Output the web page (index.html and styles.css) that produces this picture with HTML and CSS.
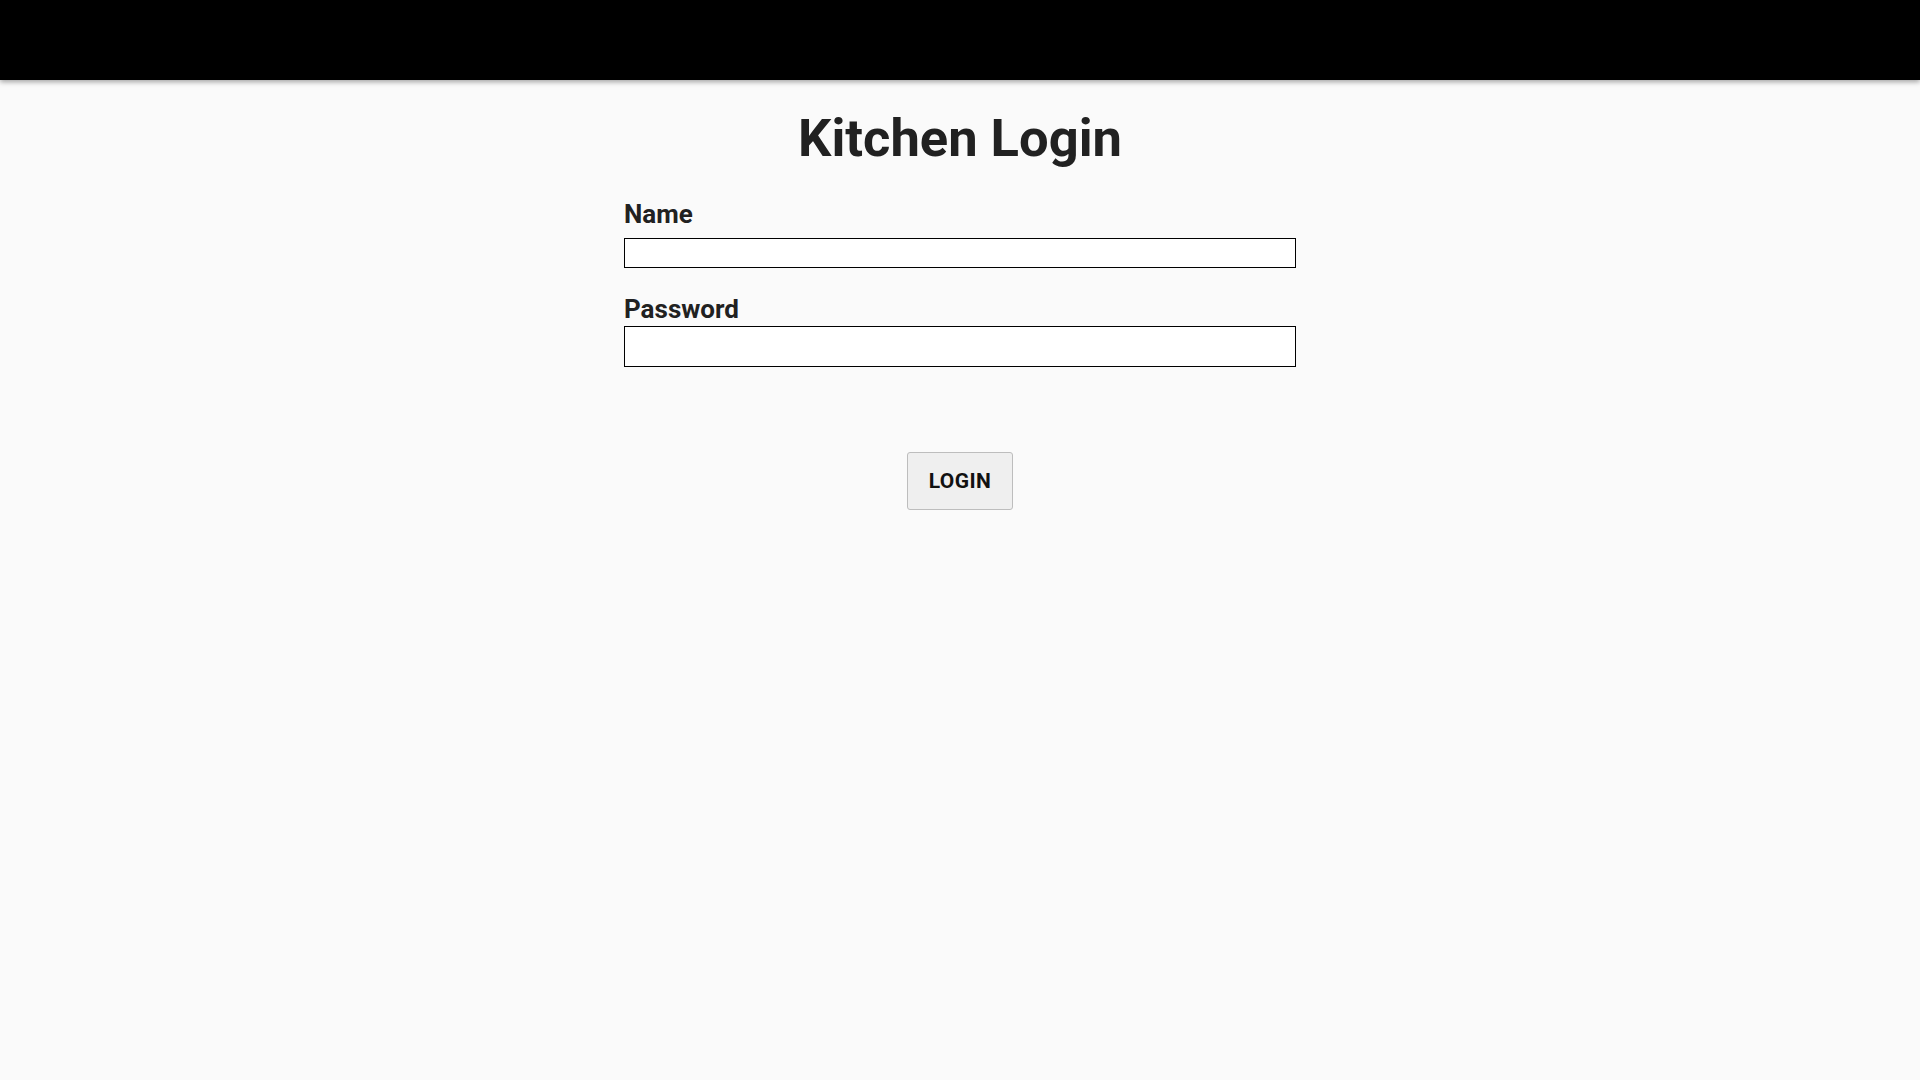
FILE: index.html
```html
<!DOCTYPE html>
<html lang="en">
<head>
<meta charset="utf-8">
<title>Kitchen Login</title>
<link rel="stylesheet" href="styles.css">
</head>
<body>
<header class="topbar"></header>
<main class="page">
  <h1 class="title">Kitchen Login</h1>
  <form class="login-form">
    <label class="field-label label-name" for="name">Name</label>
    <input class="field-input input-name" id="name" type="text">
    <label class="field-label label-password" for="password">Password</label>
    <input class="field-input input-password" id="password" type="password">
    <div class="actions">
      <button class="login-btn" type="button">LOGIN</button>
    </div>
  </form>
</main>
</body>
</html>
```
FILE: styles.css
```css
* { box-sizing: border-box; }
html, body {
  margin: 0;
  padding: 0;
  background: #fafafa;
  font-family: Roboto, "Liberation Sans", Arial, sans-serif;
  color: #212121;
}
.topbar {
  height: 80px;
  background: #000;
  box-shadow: 0 2px 5px rgba(0,0,0,0.35);
  position: relative;
  z-index: 1;
}
.page {
  display: flex;
  flex-direction: column;
  align-items: center;
}
.title {
  margin: 26px 0 0;
  font-size: 52.5px;
  line-height: 64px;
  font-weight: 700;
  color: #212121;
}
.login-form {
  width: 672px;
  display: flex;
  flex-direction: column;
  margin-top: 30px;
}
.field-label {
  font-size: 26px;
  line-height: 28px;
  font-weight: 700;
  color: #212121;
}
.field-input {
  width: 100%;
  border: 1px solid #000;
  background: #fff;
  border-radius: 0;
  padding: 0 6px;
  font-family: inherit;
  font-size: 16px;
  outline: none;
}
.input-name {
  margin-top: 10px;
  height: 30px;
}
.label-password {
  margin-top: 27px;
}
.input-password {
  margin-top: 3px;
  height: 41px;
}
.actions {
  display: flex;
  justify-content: center;
  margin-top: 85px;
}
.login-btn {
  width: 106px;
  height: 58px;
  background: #efefef;
  border: 1px solid #bdbdbd;
  border-radius: 3px;
  font-family: Roboto, "Liberation Sans", Arial, sans-serif;
  font-size: 21px;
  font-weight: 700;
  letter-spacing: 0.4px;
  color: #111;
  padding: 0;
  cursor: pointer;
}
```
